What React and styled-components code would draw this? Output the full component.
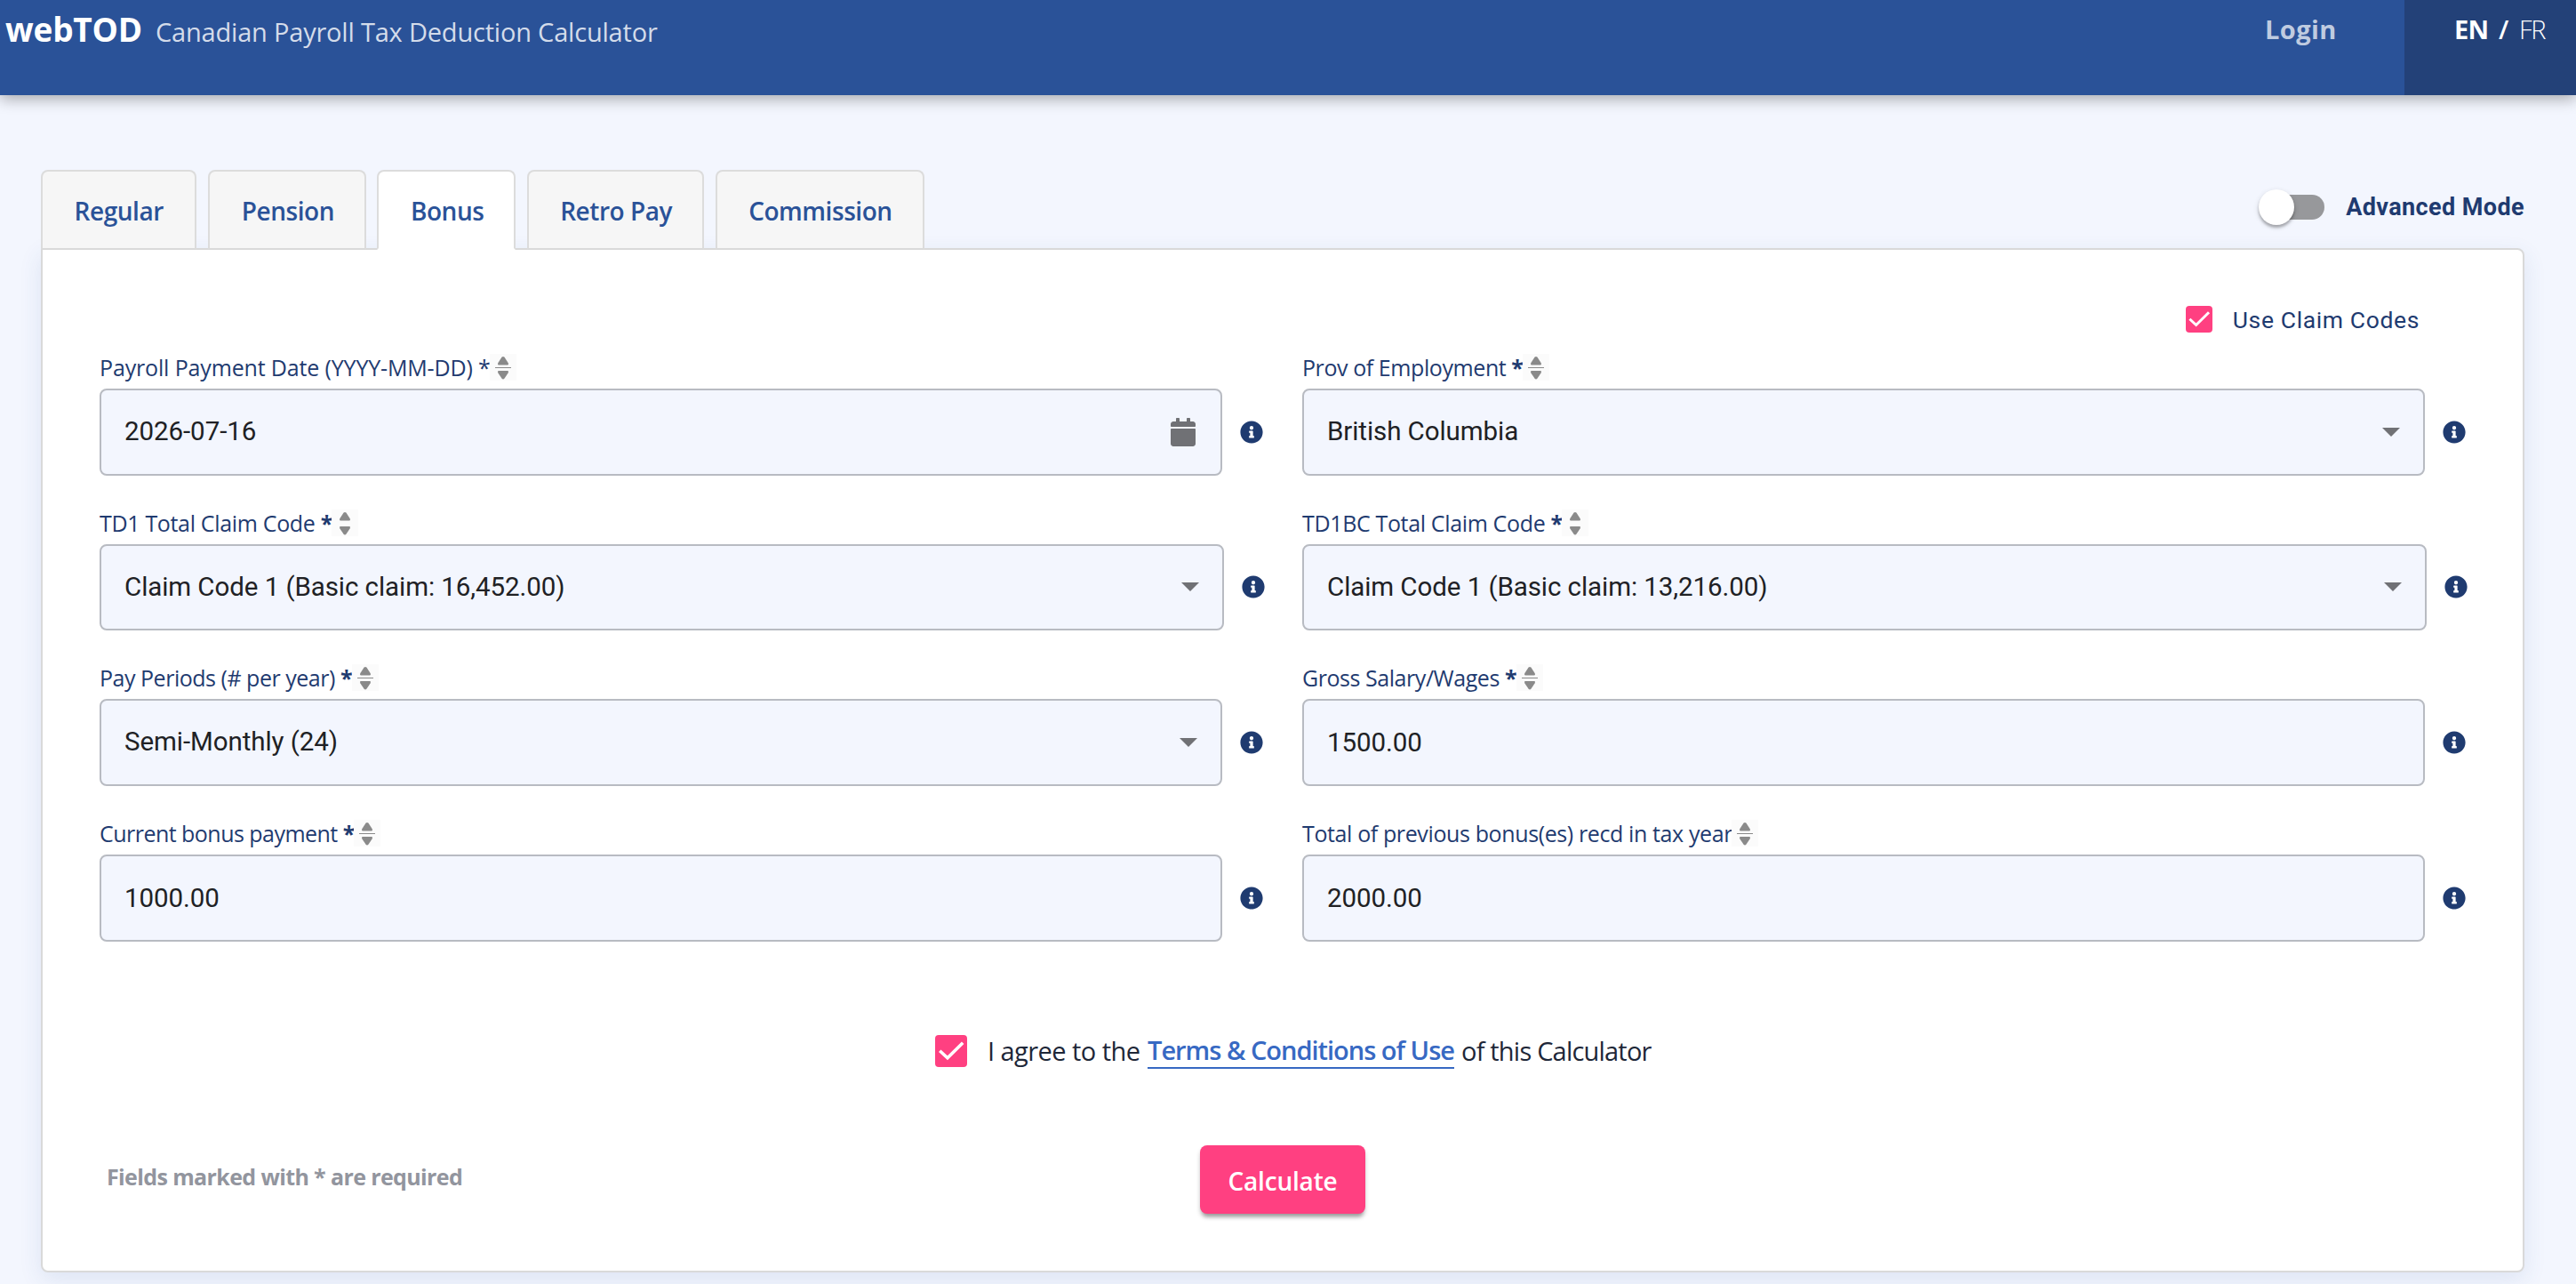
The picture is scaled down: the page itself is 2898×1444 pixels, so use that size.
import React from "react";
import styled, { createGlobalStyle } from "styled-components";
import { FaCalendar, FaInfoCircle } from "react-icons/fa";

const GlobalStyle = createGlobalStyle`
    * {
        box-sizing: border-box;
    }

    body {
        margin: 0;
        background: #f3f6fe;
        font-family: "Open Sans", "Noto Sans", sans-serif;
        color: #1f3b70;
    }
`;

const Page = styled.div`
    height: 1444px;
    overflow: hidden;
`;

const Header = styled.header`
    position: relative;
    display: flex;
    height: 107px;
    background: #2a5298;
    box-shadow: 0 4px 16px rgba(0, 0, 0, 0.33);
`;

const Brand = styled.div`
    display: flex;
    flex: 1;
    align-items: baseline;
    height: 66px;
    padding-left: 6px;
    line-height: 66px;
    white-space: nowrap;
`;

const BrandName = styled.span`
    width: 169px;
    color: #fff;
    font-size: 37px;
    font-weight: 700;
    letter-spacing: ${(props) => props.$spacing}px;
`;

const BrandTitle = styled.span`
    color: #d4dcea;
    font-size: 29px;
    letter-spacing: ${(props) => props.$spacing}px;
`;

const LoginLink = styled.a`
    width: 157px;
    color: #bfcbe0;
    font-size: 29px;
    font-weight: 700;
    line-height: 66px;
    letter-spacing: ${(props) => props.$spacing}px;
`;

const Languages = styled.div`
    display: flex;
    width: 193px;
    padding-left: 56px;
    background: #234178;
    color: #fff;
    font-size: 29px;
    line-height: 66px;
`;

const Language = styled.span`
    width: ${(props) => props.$width}px;
    font-weight: ${(props) => props.$weight};
    letter-spacing: ${(props) => props.$spacing}px;
`;

const Main = styled.main`
    padding: 84px 58px 0 46px;
`;

const TopBar = styled.div`
    position: relative;
    z-index: 1;
    display: flex;
    justify-content: space-between;
    height: 90px;
    margin-bottom: -2px;
`;

const Tabs = styled.nav`
    display: flex;
    gap: 12.8px;
`;

const Tab = styled.button`
    width: ${(props) => props.$width}px;
    height: 90px;
    padding: 2px 0 0 35.6px;
    border: 2px solid #dcdcdc;
    border-bottom-color: ${(props) => (props.$active ? "#fff" : "#d9d9d9")};
    border-radius: 8px 8px 0 0;
    background: ${(props) => (props.$active ? "#fff" : "#f6f6f6")};
    color: #2a5298;
    font-family: inherit;
    font-size: 28px;
    font-weight: 600;
    text-align: left;
    white-space: nowrap;
    letter-spacing: -0.45px;
`;

const AdvancedMode = styled.label`
    display: flex;
    align-items: center;
    gap: 24px;
    height: 84px;
    color: #1f3b70;
    font-family: Roboto, sans-serif;
    font-size: 27px;
    font-weight: 700;
    letter-spacing: 0.4px;
`;

const Track = styled.span`
    display: flex;
    align-items: center;
    width: 70px;
    height: 28px;
    border-radius: 14px;
    background: #97989b;
`;

const Knob = styled.span`
    width: 40px;
    height: 40px;
    margin-left: -4px;
    border-radius: 50%;
    background: #fff;
    box-shadow: 0 3px 3px rgba(0, 0, 0, 0.25), 0 2px 6px rgba(0, 0, 0, 0.14);
`;

const Panel = styled.section`
    height: 1152px;
    padding: 63px 0 0 64px;
    border: 2px solid #d9d9d9;
    border-radius: 0 8px 8px 8px;
    background: #fff;
    box-shadow: 0 8px 26px rgba(42, 82, 152, 0.11);
`;

const ClaimCodes = styled.label`
    display: flex;
    align-items: center;
    justify-content: flex-end;
    gap: 23px;
    height: 30px;
    margin: 0 116px 24px 0;
    color: #1f3b70;
    font-family: Roboto, sans-serif;
    font-size: 26.5px;
    letter-spacing: 0.62px;
`;

const Box = styled.span`
    display: flex;
    width: ${(props) => props.$size}px;
    height: ${(props) => props.$size}px;
    border-radius: 4px;
    background: #ff4081;
`;

const Form = styled.div`
    display: grid;
    grid-template-columns: 1353px 1353px;
    grid-auto-rows: 174.7px;
`;

const Label = styled.div`
    display: flex;
    height: 39px;
    color: #1f3b70;
    font-size: 25px;
    line-height: 31px;
    white-space: nowrap;
`;

const LabelText = styled.span`
    width: ${(props) => props.$width}px;
    letter-spacing: ${(props) => props.$spacing}px;
`;

const Control = styled.div`
    display: flex;
    align-items: center;
    gap: 20px;
`;

const Input = styled.div`
    display: flex;
    align-items: center;
    justify-content: space-between;
    width: ${(props) => (props.$wide ? 1265 : 1263)}px;
    height: 97.5px;
    padding: 0 26px;
    border: 2px solid #b8bbc2;
    border-radius: 8px;
    background: #f3f6fe;
    color: #202124;
    font-family: Roboto, sans-serif;
    font-size: 29.5px;
    letter-spacing: -0.07px;
`;

const Value = styled.span`
    padding-bottom: ${(props) => (props.$raised ? 2 : 0)}px;
`;

const Agreement = styled.div`
    display: flex;
    align-items: center;
    height: 40px;
    margin: 65px 0 0 940px;
    color: #1e2738;
    font-size: 29px;
    white-space: nowrap;
`;

const AgreementText = styled.span`
    width: ${(props) => props.$width}px;
    padding-left: ${(props) => props.$indent || 0}px;
    letter-spacing: ${(props) => props.$spacing}px;
`;

const TermsLink = styled.a`
    width: 345px;
    height: 40px;
    margin-right: 8px;
    border-bottom: 2px solid #3769c3;
    color: #3769c3;
    font-weight: 600;
    line-height: 38px;
    letter-spacing: -1px;
`;

const Footer = styled.div`
    display: flex;
    align-items: flex-start;
    margin-top: 86px;
`;

const Note = styled.span`
    width: 1238px;
    padding: 18px 0 0 8px;
    color: #92959e;
    font-size: 25px;
    font-weight: 700;
    line-height: 34px;
    letter-spacing: -0.62px;
`;

const CalculateButton = styled.button`
    width: 186px;
    height: 77px;
    padding: 3px 0 0;
    border: 0;
    border-radius: 8px;
    background: #ff4081;
    box-shadow: 0 6px 4px -3px rgba(0, 0, 0, 0.25), 0 4px 5px rgba(0, 0, 0, 0.2);
    color: #fff;
    font-family: inherit;
    font-size: 28px;
    font-weight: 600;
    letter-spacing: -0.2px;
`;

const Checkbox = ({ size }) => (
    <Box $size={size}>
        <svg width={size} height={size} viewBox="0 0 24 24">
            <path d="M3.5 11.8 L9.3 17.2 L20.8 5.8" fill="none" stroke="#fff" strokeWidth="2.4" />
        </svg>
    </Box>
);

const SortIcon = ({ divided }) => (
    <svg width="30" height="30" viewBox="0 0 30 30">
        <rect width="30" height="30" fill="#fbfbfb" />
        <path
            d="M13.6 3.6 Q15 2.2 16.4 3.6 L20.6 10 Q21.6 12.4 20 12.4 H10 Q8.4 12.4 9.4 10 Z"
            fill="#8a8a8a"
        />
        <path
            d="M13.6 27.8 Q15 29.2 16.4 27.8 L20.6 21.4 Q21.6 19 20 19 H10 Q8.4 19 9.4 21.4 Z"
            fill="#8a8a8a"
        />
        {divided && <rect x="6" y="15" width="18" height="1" fill="#8a8a8a" />}
    </svg>
);

const Caret = () => (
    <svg width="20" height="10" viewBox="0 0 20 10">
        <path d="M0 0 H20 L10 10 Z" fill="#707175" />
    </svg>
);

const tabs = [
    { name: "Regular", width: 175.4 },
    { name: "Pension", width: 177.4 },
    { name: "Bonus", width: 155.4 },
    { name: "Retro Pay", width: 199.2 },
    { name: "Commission", width: 235 },
];

const fields = [
    { label: "Payroll Payment Date (YYYY-MM-DD) *", width: 439, spacing: -0.15, value: "2026-07-16", icon: "calendar", divided: true, raised: true },
    { label: "Prov of Employment", required: true, width: 248, spacing: -0.42, value: "British Columbia", icon: "caret", divided: true, raised: true },
    { label: "TD1 Total Claim Code", required: true, width: 261, spacing: -0.33, value: "Claim Code 1 (Basic claim: 16,452.00)", icon: "caret", wide: true },
    { label: "TD1BC Total Claim Code", required: true, width: 292, spacing: -0.35, value: "Claim Code 1 (Basic claim: 13,216.00)", icon: "caret", wide: true },
    { label: "Pay Periods (# per year)", required: true, width: 284, spacing: -0.48, value: "Semi-Monthly (24)", icon: "caret", divided: true, raised: true },
    { label: "Gross Salary/Wages", required: true, width: 241, spacing: -0.45, value: "1500.00", divided: true },
    { label: "Current bonus payment", required: true, width: 286, spacing: -0.53, value: "1000.00", divided: true },
    { label: "Total of previous bonus(es) recd in tax year", width: 483, spacing: -0.38, value: "2000.00", divided: true },
];

const Field = ({ field }) => (
    <div>
        <Label>
            <LabelText $width={field.width} $spacing={field.spacing}>
                {field.label}
                {field.required && <b> *</b>}
            </LabelText>
            <SortIcon divided={field.divided} />
        </Label>
        <Control>
            <Input $wide={field.wide}>
                <Value $raised={field.raised}>{field.value}</Value>
                {field.icon === "calendar" && <FaCalendar size={32} color="#707175" />}
                {field.icon === "caret" && <Caret />}
            </Input>
            <FaInfoCircle size={26} color="#1f3b70" />
        </Control>
    </div>
);

class App extends React.Component {
    render() {
        return (
            <Page>
                <GlobalStyle />
                <Header>
                    <Brand>
                        <BrandName $spacing={-0.2}>webTOD</BrandName>
                        <BrandTitle $spacing={-0.2}>Canadian Payroll Tax Deduction Calculator</BrandTitle>
                    </Brand>
                    <LoginLink $spacing={0.4}>Login</LoginLink>
                    <Languages>
                        <Language $width={50} $weight={700} $spacing={-0.8}>EN</Language>
                        <Language $width={23} $weight={600} $spacing={0}>/</Language>
                        <Language $width={30} $weight={300} $spacing={-1.4}>FR</Language>
                    </Languages>
                </Header>

                <Main>
                    <TopBar>
                        <Tabs>
                            {tabs.map((tab) => (
                                <Tab key={tab.name} $width={tab.width} $active={tab.name === "Bonus"}>
                                    {tab.name}
                                </Tab>
                            ))}
                        </Tabs>
                        <AdvancedMode>
                            <Track>
                                <Knob />
                            </Track>
                            <span>Advanced Mode</span>
                        </AdvancedMode>
                    </TopBar>

                    <Panel>
                        <ClaimCodes>
                            <Checkbox size={30} />
                            <span>Use Claim Codes</span>
                        </ClaimCodes>

                        <Form>
                            {fields.map((field) => (
                                <Field key={field.label} field={field} />
                            ))}
                        </Form>

                        <Agreement>
                            <Checkbox size={36} />
                            <AgreementText $width={203} $indent={23} $spacing={-0.55}>I agree to the</AgreementText>
                            <TermsLink>Terms &amp; Conditions of Use</TermsLink>
                            <AgreementText $width={230} $spacing={-0.8}>of this Calculator</AgreementText>
                        </Agreement>

                        <Footer>
                            <Note>Fields marked with * are required</Note>
                            <CalculateButton>Calculate</CalculateButton>
                        </Footer>
                    </Panel>
                </Main>
            </Page>
        );
    }
}

export default App;
